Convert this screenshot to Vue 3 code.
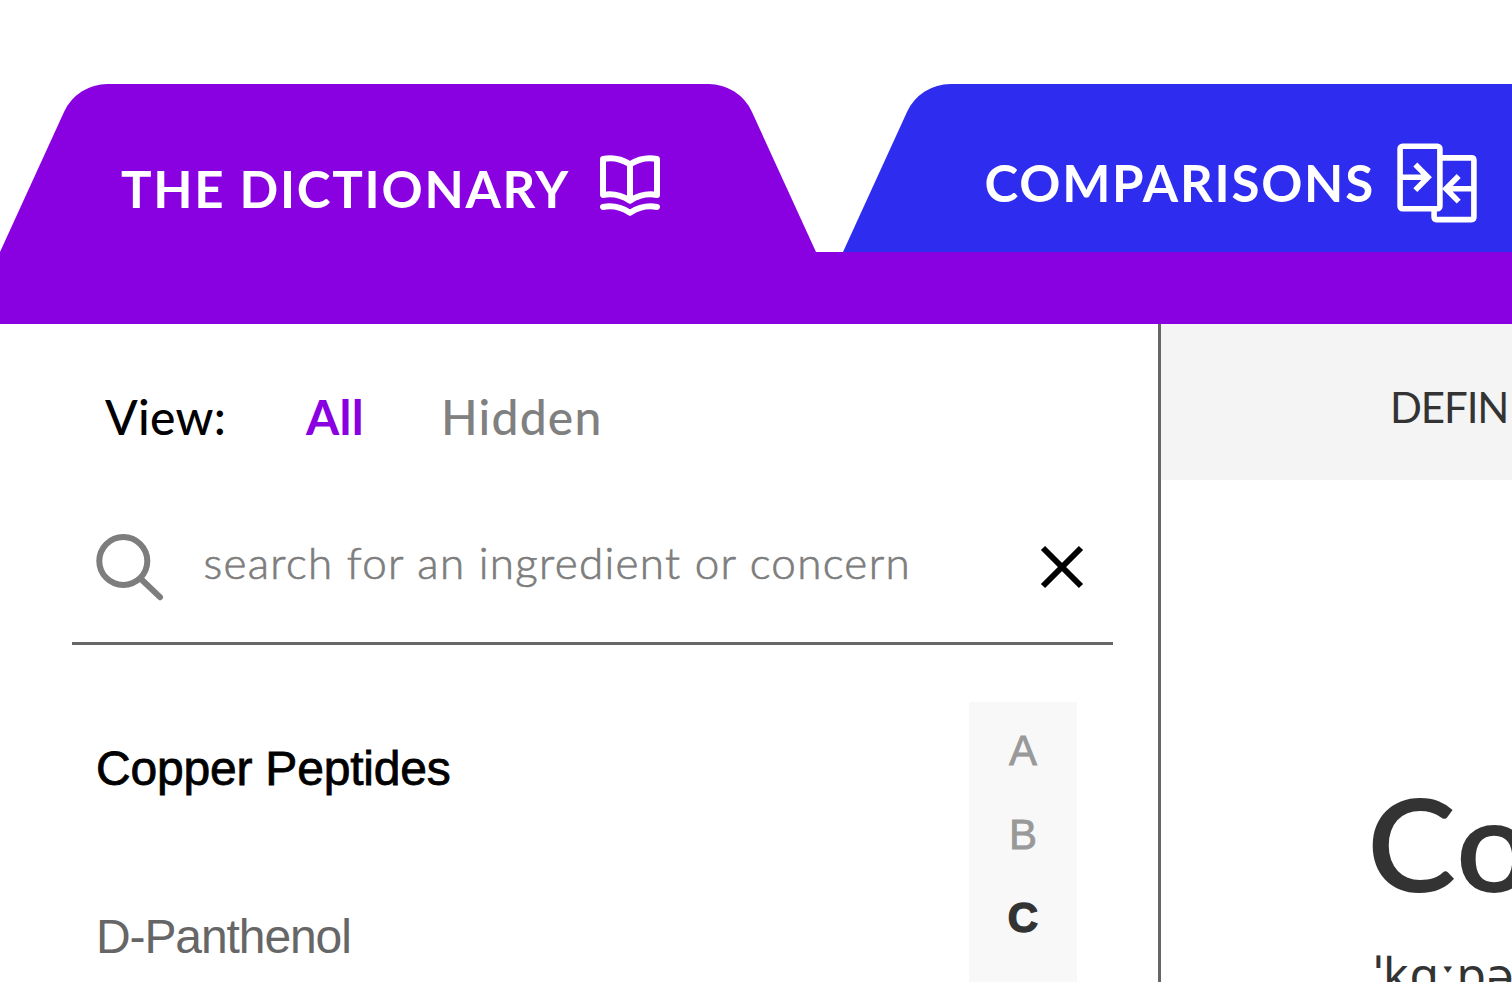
<script setup>
const ingredients = [
  { name: 'Copper Peptides', active: true },
  { name: 'D-Panthenol', active: false },
]
const letters = ['A', 'B', 'C']
const current = 'C'
</script>

<template>
  <div class="page">
    <header class="header">
      <nav class="tabs">
        <a class="tab dictionary">
          <svg class="shape" width="816" height="168" viewBox="0 0 816 168">
            <path d="M0 168 L64 28 A48 48 0 0 1 107.6 0 H708.4 A48 48 0 0 1 752 28 L816 168 Z" fill="#8900e1" />
          </svg>
          <span class="label">THE DICTIONARY</span>
          <svg class="book" width="60" height="62" viewBox="0 0 60 62" fill="none" stroke="#fff" stroke-width="6" stroke-linecap="round" stroke-linejoin="round">
            <path d="M3 4 C12 2 21 3.6 30 9.2 C39 3.6 48 2 57 4 V40 C48 38.2 39 40 30 45.7 C21 40 12 38.2 3 40 Z" />
            <path d="M30 9 V45" />
            <path d="M3 52 C12 50.2 21 52 30 57.7 C39 52 48 50.2 57 52" />
          </svg>
        </a>
        <a class="tab comparisons">
          <svg class="shape" width="816" height="168" viewBox="0 0 816 168">
            <path d="M0 168 L64 28 A48 48 0 0 1 107.6 0 H708.4 A48 48 0 0 1 752 28 L816 168 Z" fill="#2e2cee" />
          </svg>
          <span class="label">COMPARISONS</span>
          <svg class="compare" width="80" height="80" viewBox="0 0 80 80" fill="none" stroke="#fff" stroke-width="5.6">
            <rect x="3.1" y="3.3" width="39.8" height="62.4" rx="2.4" />
            <path d="M43 14.9 H74.4 Q76.9 14.9 76.9 17.4 V74.1 Q76.9 76.6 74.4 76.6 H39.6 Q37.1 76.6 37.1 74.1 V66" />
            <path d="M4 34.3 H30 M18.3 21.5 L31 34.3 L18.3 47.1" />
            <path d="M76 45.8 H50 M61.7 33 L49 45.8 L61.7 58.6" />
          </svg>
        </a>
      </nav>
      <div class="bar"></div>
    </header>

    <main class="body">
      <aside class="side">
        <div class="view">
          <span class="view-label">View:</span>
          <span class="view-all">All</span>
          <span class="view-hidden">Hidden</span>
        </div>
        <div class="search">
          <svg class="glass" width="70" height="70" viewBox="0 0 70 70" fill="none" stroke="#7d7d7d" stroke-width="6">
            <circle cx="29.3" cy="29" r="24" />
            <path d="M47 47 L66 65.2" stroke-linecap="round" />
          </svg>
          <span class="placeholder">search for an ingredient or concern</span>
          <svg class="clear" width="44" height="44" viewBox="0 0 44 44" stroke="#000" stroke-width="6">
            <path d="M3 3 L41 41 M41 3 L3 41" />
          </svg>
        </div>
        <div class="lists">
          <ul class="ingredients">
            <li v-for="i in ingredients" :key="i.name" :class="{ active: i.active }">{{ i.name }}</li>
          </ul>
          <ul class="letters">
            <li v-for="l in letters" :key="l" :class="{ current: l === current }">{{ l }}</li>
          </ul>
        </div>
      </aside>
      <section class="content">
        <div class="subnav"><span>DEFIN</span></div>
        <h1 class="title">Co</h1>
        <p class="phonetic">ˈkɑːpə</p>
      </section>
    </main>
  </div>
</template>

<style>
body {
  margin: 0;
  background: #fff;
}
</style>

<style scoped>
.page {
  display: flex;
  flex-direction: column;
  width: 1512px;
  height: 982px;
  overflow: hidden;
  background: #fff;
  font-family: Lato, "Liberation Sans", sans-serif;
  white-space: nowrap;
}
.header {
  flex: none;
  padding-top: 84px;
}
.tabs {
  display: flex;
  gap: 27px;
  height: 168px;
}
.tab {
  position: relative;
  flex: none;
  display: flex;
  align-items: flex-start;
  box-sizing: border-box;
  width: 816px;
  height: 168px;
  color: #fff;
}
.shape {
  position: absolute;
  left: 0;
  top: 0;
}
.label {
  position: relative;
  font-size: 51px;
  line-height: 61px;
}
.book,
.compare {
  position: relative;
  flex: none;
}
.dictionary {
  padding: 74px 0 0 121px;
}
.dictionary .label {
  width: 479px;
  font-weight: 700;
  letter-spacing: 1.72px;
}
.book {
  margin-top: -3px;
}
.comparisons {
  padding: 68px 0 0 141.5px;
}
.comparisons .label {
  width: 412.5px;
  font-weight: 700;
  letter-spacing: 1.75px;
}
.compare {
  margin-top: -9px;
}
.bar {
  height: 72px;
  background: #8900e1;
}
.body {
  flex: 1;
  display: flex;
  min-height: 0;
}
.side {
  flex: none;
  box-sizing: border-box;
  width: 1161px;
  padding: 0 45px 0 72px;
  border-right: 3px solid #666;
}
.view {
  display: flex;
  padding: 64px 0 0 33px;
  font-size: 48px;
  line-height: 57px;
}
.view-label {
  width: 201px;
  font-weight: 500;
  letter-spacing: 0.3px;
}
.view-all {
  width: 135px;
  font-weight: 700;
  letter-spacing: 0.3px;
  color: #8900e1;
}
.view-hidden {
  font-weight: 500;
  letter-spacing: 1.2px;
  color: #808080;
}
.search {
  display: flex;
  align-items: flex-start;
  box-sizing: border-box;
  height: 135px;
  margin-top: 65px;
  padding: 22px 0 0 22px;
  border-bottom: 3px solid #666;
}
.placeholder {
  width: 836.5px;
  margin: 4px 0 0 39.5px;
  font-size: 44px;
  font-weight: 300;
  line-height: 52px;
  letter-spacing: 1.31px;
  color: #7d7d7d;
  -webkit-text-stroke: 0.7px #7d7d7d;
}
.clear {
  margin-top: 13px;
}
.lists {
  display: flex;
  justify-content: space-between;
  font-family: "Liberation Sans", sans-serif;
}
ul {
  margin: 0;
  padding: 0;
  list-style: none;
}
.ingredients {
  padding: 40px 0 0 24px;
}
.ingredients li {
  height: 168px;
  font-size: 48px;
  line-height: 168px;
  letter-spacing: -1.1px;
  color: #666;
}
.ingredients .active {
  letter-spacing: -0.2px;
  color: #000;
  -webkit-text-stroke: 0.8px #000;
}
.letters {
  width: 108px;
  height: 300px;
  margin: 57px 36px 0 0;
  padding-top: 7px;
  box-sizing: border-box;
  background: #f8f8f8;
  text-align: center;
}
.letters li {
  height: 84px;
  font-size: 42px;
  line-height: 84px;
  color: #999;
  -webkit-text-stroke: 0.8px #999;
}
.letters .current {
  font-size: 42px;
  line-height: 81px;
  font-weight: 700;
  color: #333;
  -webkit-text-stroke: 1.4px #333;
}
.content {
  flex: 1;
  min-width: 0;
  overflow: hidden;
  color: #333;
}
.subnav {
  height: 156px;
  box-sizing: border-box;
  padding: 58px 0 0 229px;
  background: #f4f4f4;
  font-size: 42px;
  line-height: 50px;
  letter-spacing: -1.1px;
}
.title {
  margin: 283px 0 0 206px;
  font-size: 129px;
  font-weight: 600;
  line-height: 158px;
  letter-spacing: 1px;
  transform: scaleX(1.04);
  transform-origin: left;
}
.phonetic {
  margin: 20px 0 0 213.5px;
  font-family: "Noto Sans", sans-serif;
  font-size: 48px;
  line-height: 65px;
  letter-spacing: 0.9px;
}
</style>
